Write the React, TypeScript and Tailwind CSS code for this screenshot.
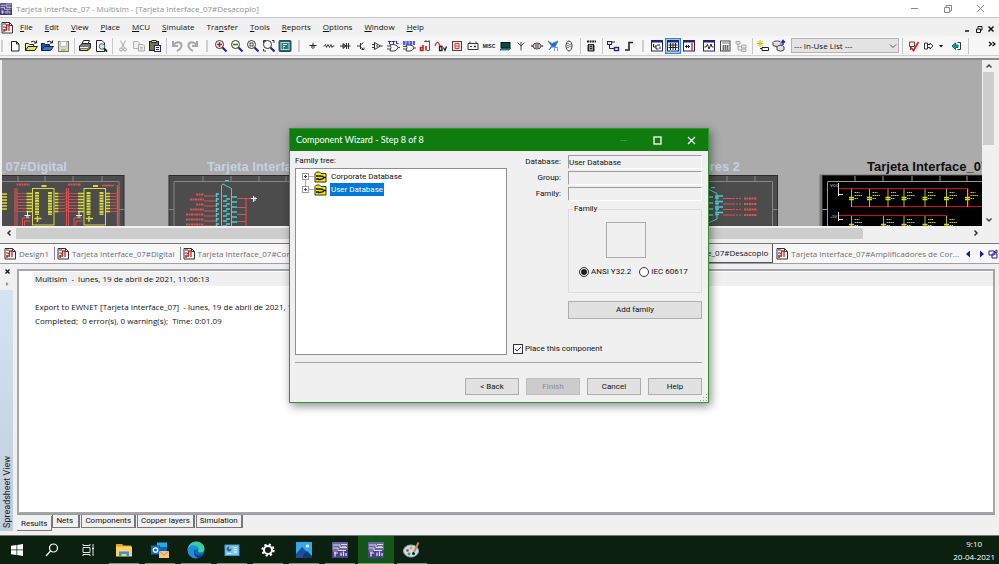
import React from "react";

const UI = "font-['Open_Sans','Noto_Sans',sans-serif]";

type G = { children?: React.ReactNode; w?: string };
const Ico = ({ children, w = "w-4" }: G) => (
  <svg viewBox="0 0 16 16" className={`h-4 ${w} block`} fill="none" stroke="#222" strokeWidth="1">
    {children}
  </svg>
);

const Grip = () => <span className="flex w-3 shrink-0 justify-center"><span className="h-3 w-[2px] bg-[#cfcfcf]" /></span>;
const Sep = () => <span className="flex w-[6px] shrink-0 justify-center"><span className="h-4 w-px bg-[#c8c8c8]" /></span>;

const folder = (a: string, b: string) => (
  <>
    <path d="M2.500 12.500V5.500H5.500L6.500 6.500H10.500V8" fill={b} />
    <path d="M2.500 12.500L5 8.500H14.500L11.500 12.500Z" fill={a} />
    <path d="M8 4Q10.500 2 13 4.500M13.500 2.500V5H11" />
  </>
);
const lens = (inner: React.ReactNode) => (
  <>
    <circle cx="6.500" cy="6.500" r="4" fill="#fff" stroke="#333" />
    <path d="M9.500 9.500L13.500 13.500" stroke="#26268a" strokeWidth="2.200" />
    {inner}
  </>
);
const panelIco = (inner: React.ReactNode) => (
  <>
    <rect x="2.500" y="2.500" width="11" height="10.500" fill="#fff" stroke="#22227c" />
    <path d="M2 3.500H14" stroke="#22227c" strokeWidth="2" />
    {inner}
  </>
);

const icons: Record<string, React.ReactNode> = {
  New: <path d="M4.500 3.500V13H12V6L9.500 3.500Z M9.500 3.500V6H12" fill="#fff" />,
  Open: folder("#e3e35a", "#f2f2b0"),
  "Open sample": folder("#2a7be8", "#2a57c8"),
  Save: <><rect x="3.500" y="3.500" width="10" height="10" fill="#d9d9c8" stroke="#777" /><rect x="5.500" y="3.500" width="6" height="5" fill="#fdfde8" stroke="#bbb" /><path d="M6 12H11" stroke="#c8c83c" strokeWidth="2" /></>,
  Print: <><path d="M5 6L6.500 2.500H12.500L11 6" fill="#fff" /><path d="M2.500 8L5 5.500H13.500V10L11 12.500H2.500Z" fill="#777" /><path d="M3 9.500H11" stroke="#eee" /><path d="M4 11.500H10" stroke="#d8d850" /></>,
  Preview: <><path d="M3.500 13.500V2.500H9L11.500 5V13.500Z" fill="#fff" /><circle cx="9" cy="8.500" r="2.800" fill="#cfe9e4" stroke="#466" /><path d="M11 10.500L14 13.500" strokeWidth="2" /></>,
  Cut: <path d="M5.500 2.500L9.500 10M10.500 2.500L6.500 10M6 10A1.500 1.500 0 1 0 6 13A1.500 1.500 0 1 0 6 10M10 10A1.500 1.500 0 1 0 10 13A1.500 1.500 0 1 0 10 10" stroke="#aaa" />,
  Copy: <><path d="M2.500 3.500H7L8.500 5V10.500H2.500Z" fill="#eee" stroke="#b0b0b0" /><path d="M7.500 6.500H12L13.500 8V13H7.500Z" fill="#eee" stroke="#aaa" /><path d="M9 9.500H12M9 11H12" stroke="#bbb" /></>,
  Paste: <><rect x="2.500" y="3.500" width="9" height="9" fill="#77773a" /><rect x="5" y="2.500" width="4" height="2" fill="#ddd" /><rect x="7.500" y="7.500" width="6" height="6" fill="#fff" stroke="#26268a" /><path d="M9 9.500H12M9 11.500H12" stroke="#26268a" /></>,
  Undo: <path d="M4 3V8H9M4 7.500Q7 3.500 10.500 4.500Q13.500 6 12 9.500Q10.500 12 8 13" stroke="#a8a8a8" strokeWidth="2" />,
  Redo: <path d="M12 3V8H7M12 7.500Q9 3.500 5.500 4.500Q2.500 6 4 9.500Q5.500 12 8 13" stroke="#a8a8a8" strokeWidth="2" />,
  "Zoom in": lens(<path d="M4 6.500H9M6.500 4V9" stroke="#c01818" strokeWidth="1.600" />),
  "Zoom out": lens(<path d="M4 6.500H9" stroke="#138a13" strokeWidth="1.600" />),
  "Zoom area": lens(<rect x="5" y="5" width="3" height="3" stroke="#444" />),
  "Zoom sheet": lens(<path d="M2.500 5V2.500H5M11 2.500H13V5M2.500 11V13H5" stroke="#333" />),
  "Full screen": <><rect x="2" y="2.500" width="12" height="11" rx="1" fill="#1f6b6b" stroke="#444" /><rect x="4" y="4.500" width="8" height="7" fill="#257f7d" stroke="#9be0d8" /><path d="M6 6.500H10M6 8.500H8M6 10H7" stroke="#d5fff8" /></>,
  Source: <path d="M8 5V7.500M4.500 7.500H11.500M6 9H10M7.500 10.500H8.500" />,
  Basic: <path d="M2.500 8H3.500L4.500 6.500L5.500 9.500L7 6.500L8.500 9.500L10 6.500L11 9.500L12 8H13.500" stroke="#444" />,
  Diode: <path d="M3 8H6M6 5.500V10.500L9 8ZM9.500 5V11M11.500 5V11M9.500 8H13.500" fill="#777" stroke="#333" />,
  Transistor: <path d="M4 8H7M7.500 5V11M7.500 7L10.500 4.500M7.500 9L10.500 11.500M8.500 11.500H11V9.500" stroke="#333" />,
  Analog: <path d="M5.500 4.500V11.500L11.500 8ZM3 6.500H5.500M3 9.500H5.500M11.500 8H13.500M7 8H9" stroke="#333" />,
  TTL: <><path d="M5 6.500H9Q13 7.500 13 9.500Q12 12.500 9 13H5Q7 9.500 5 6.500ZM2 8H5.500M2 11H5.500M13 9.500H15" stroke="#444" /><path d="M3 3.500H6.500M4.500 3V6M7 3.500H10.500M8.500 3V6M11.500 3V5.500H13.500" stroke="#2424e8" /></>,
  CMOS: <><path d="M5 7H9Q13 7.500 13 10Q12 12.500 9 13H5Q7 9.500 5 7ZM2 8.500H5.500M2 11H5.500M13 10H15" stroke="#444" /><path d="M2 4H14M2 6H14" stroke="#2424e8" strokeWidth="1.300" strokeDasharray="2.500 .8" /></>,
  "Misc digital": <><path d="M7 3.500H12.500V12.500H10M9 2V4M12 2V4" stroke="#555" /><path d="M6 7V13M6 9.500H3.500V12.500H6M9 8V12.500" stroke="#e01818" strokeWidth="1.600" /></>,
  Mixed: <><path d="M2 8Q4 2 6 6T9 8" stroke="#e03030" strokeWidth="1.300" /><path d="M6.500 8.500H9V12.500H6.500ZM10.500 9.500L12 12.500L13.500 8.500" strokeWidth="1.300" /></>,
  Indicator: <><rect x="3.500" y="3.500" width="9" height="9" fill="#fbe3e3" stroke="#444" /><path d="M6 5.500H10V8H6V10.500H10M6 5.500V8M10 8V10.500" stroke="#d43a3a" /></>,
  Power: <path d="M3 5.500H13V11.500H3ZM5 3.500V5.500M11 3.500V5.500M5 8.500H7M9 8.500H11M10 7.500V9.500" stroke="#333" />,
  Misc: <text x="8" y="10" textAnchor="middle" fontSize="5" fontWeight="bold" fill="#222" stroke="none" fontFamily="Liberation Sans">MISC</text>,
  Peripherals: <><rect x="4" y="4.500" width="9" height="5.500" fill="#064c46" stroke="#111" /><path d="M3 12L4.500 10.500H13.500L12 12Z" fill="#24a79b" stroke="#224" strokeWidth=".6" /></>,
  RF: <path d="M8 4V12.500M4.500 4.500L8 8L11.500 4.500" stroke="#444" />,
  Electromechanical: <><path d="M2 8H4M12 8H14" stroke="#d02020" strokeWidth="1.500" /><ellipse cx="8" cy="8" rx="4" ry="3" fill="#ddd" stroke="#444" /><path d="M6 7H10M6 9H10" stroke="#444" /></>,
  "NI component": <><path d="M3 3L7 5.500L13 3L11 7L10 9H7L4 12L6.500 8Z" fill="#2b6cb8" stroke="#4b8bd0" /><path d="M9.500 13V9.500H12.500V13" stroke="#7a9cc0" /></>,
  Connector: <><ellipse cx="8" cy="8" rx="3" ry="5" fill="#eee" stroke="#444" /><path d="M7 5V11M9 6V10" strokeDasharray="1 1" /></>,
  MCU: <><path d="M4 3.500H13" strokeWidth="2" strokeDasharray="2 .6" /><rect x="5.500" y="6.500" width="5" height="6.500" fill="#999" /><path d="M4 8H5M4 10H5M4 12H5M11 8H12M11 10H12M11 12H12M7 8.500H9M7 10.500H9" /></>,
  "Hierarchical block": <><rect x="2.500" y="3.500" width="4" height="3" fill="#ddf" stroke="#26268a" /><path d="M6.500 4H10M4.500 7V10.500H9" /><rect x="9.500" y="9.500" width="4" height="3" fill="#fff" stroke="#26268a" strokeWidth="1.400" /></>,
  Bus: <path d="M4 12H8V4.500H12" strokeWidth="1.600" />,
  Toolbox: panelIco(<path d="M4.500 6V9H7M7 7V11H9.500M8 7H11M11 8.500V11" />),
  Spreadsheet: <><rect x=".5" y=".5" width="15" height="15" fill="#cfe6fb" stroke="#2b88d8" strokeWidth="1.500" />{panelIco(<path d="M5.500 5V12M8 5V12M10.500 5V12M3.500 7H12.500M3.500 9.500H12.500" />)}</>,
  "SPICE viewer": panelIco(<><path d="M4 8.500H9M5.500 7V10M7.500 7V10" /><path d="M11 5V13" stroke="#e03030" strokeWidth="1.500" /></>),
  Grapher: panelIco(<path d="M3.500 9H5L6.500 6.500L8 11L10 6L11 9H12.500" />),
  Postprocessor: <><rect x="3.500" y="3" width="9.500" height="10" fill="#fff" stroke="#444" /><path d="M5 5H12M5 8H12M5 10H12M5 12H12M6.500 7V12M8.500 7V12M10.500 7V12" stroke="#555" strokeWidth=".8" /></>,
  "Parent sheet": <path d="M3 3.500H7V6H3ZM5 6V12H8M5 8.500H8M8.500 7H13V10H8.500ZM8.500 11H13V13.500H8.500Z" stroke="#aaa" fill="#e6e6e6" />,
  "Create component": <><path d="M5 2V9M1.500 5.500H8.500M2.500 3L7.500 8M7.500 3L2.500 8" stroke="#d9c000" /><path d="M7 9.500H13.500V12.500H7ZM5 10.500H7" fill="#fff" /></>,
  "Database manager": <><ellipse cx="6" cy="4.500" rx="4" ry="1.500" fill="#fff" stroke="#444" /><path d="M2 4.500V7.500Q6 10 10 7.500V4.500" fill="#ddd" stroke="#444" /><ellipse cx="9.500" cy="9" rx="3.500" ry="1.500" fill="#fff" stroke="#444" /><path d="M6 9V12Q9.500 14.500 13 12V9" fill="#ddd" stroke="#444" /><path d="M12 7V3M10.500 4.500L12 2.500L14 4.500" stroke="#2828c0" strokeWidth="1.500" /></>,
  "Rules check": <><path d="M4.500 4H9.500V8.500H4.500ZM5.500 8.500V12" stroke="#733" /><path d="M6 9.500L8.500 12.500L13.500 4" stroke="#e01818" strokeWidth="1.600" /></>,
  Transfer: <path d="M3.500 5H6.500V11H3.500ZM6.500 6.500H9V5L12 8L9 11V9.500H6.500" fill="#fff" stroke="#333" />,
  Back: <><path d="M3 8L6.500 5V7H9V9.500H6.500V11.500Z" fill="#12a3a3" stroke="#067" /><path d="M8.500 4.500H11.500V11.500H8.500" stroke="#333" /></>,
};

const Tool = ({ n }: { n: string }) => (
  <button type="button" aria-label={n} className="w-4 shrink-0"><Ico>{icons[n]}</Ico></button>
);
const Tools = ({ list }: { list: string[] }) => <>{list.map((n) => <Tool key={n} n={n} />)}</>;

const DocIcon = () => (
  <svg viewBox="0 0 13 13" className="block h-[13px] w-[13px] shrink-0" fill="none" stroke="#333">
    <path d="M1 1.500H8.500L11.500 4.500V12H1Z" fill="#fff" />
    <path d="M8.500 1.500V4.500H11.500M2 3H5M2 6H4M2 9H4" />
    <path d="M3 11V9H5.500V4H8V10M4 6.500H6" stroke="#d02020" strokeWidth="1.300" />
  </svg>
);

const AppIcon = ({ c }: { c: string }) => (
  <svg viewBox="0 0 16 16" className={`block shrink-0 ${c}`} fill="none">
    <rect width="16" height="16" rx="1" fill="#5a5590" />
    <path d="M0 8H16V16H0Z" fill="#3e397a" />
    <path d="M1 3H9V6H15M1 6H6V8.500H14M8 1.500H15" stroke="#d8d4f0" />
    <path d="M2 12H6M3 14.500V10M8 14V10.500M10.500 14V9.500M13 14V11" stroke="#ece6ff" strokeWidth="1.200" />
    <path d="M1 9.500H5M10 4H14" stroke="#d9a860" />
  </svg>
);

const menus: [string, string, string][] = [
  ["", "F", "ile"], ["", "E", "dit"], ["", "V", "iew"], ["", "P", "lace"], ["", "M", "CU"], ["", "S", "imulate"],
  ["Tra", "n", "sfer"], ["", "T", "ools"], ["", "R", "eports"], ["", "O", "ptions"], ["", "W", "indow"], ["", "H", "elp"],
];

const Frame = ({ x, w, fill, line, ticks }: { x: number; w: number; fill: string; line: string; ticks: number[] }) => (
  <g stroke={line} fill="none">
    <rect x={x} y="115.500" width={w} height="60" fill={fill} stroke="#2c2c2c" />
    <path d={`M${x + 5} 121.500H${x + w - 5}V170M${x + 5} 121.500V170`} />
    {ticks.map((t) => <path key={t} d={`M${t} 116V121`} />)}
    <path d={`M${x} 149.500H${x + 5}M${x + w - 5} 149.500H${x + w}`} />
  </g>
);

const Chip = ({ x }: { x: number }) => (
  <g fill="none">
    {[0, 1, 2, 3, 4, 5, 6].map((i) => (
      <g key={i}>
        <path d={`M${x - 18} ${131.5 + i * 3}L${x - 15} ${133.5 + i * 3}H${x - 6}`} stroke="#e05050" strokeWidth=".8" />
        <path d={`M${x - 6} ${133.5 + i * 3}H${x}M${x + 22} ${133.5 + i * 3}H${x + 26}`} stroke="#d8d83c" strokeWidth="1.600" />
        <path d={`M${x + 26} ${133.5 + i * 3}H${x + 32}L${x + 35} ${131.5 + i * 3}`} stroke="#e05050" strokeWidth=".8" />
      </g>
    ))}
    <rect x={x} y="128.500" width="21.500" height="36.500" stroke="#d8d83c" />
    <path d={`M${x + 4.5} 132V155M${x + 17.5} 132V155`} stroke="#d8d83c" strokeWidth="4" strokeDasharray="2 .7" />
    <path d={`M${x + 2} 158.500H${x + 9}M${x + 5} 156V162`} stroke="#d8d83c" strokeWidth="1.500" />
    <path d={`M${x - 17.5} 128V166M${x - 15.5} 128V166M${x - 10} 166V158H${x - 2}M${x - 8} 166V161H${x - 2}`} stroke="#e05050" />
    <path d={`M${x - 5} 151V155M${x - 8} 155.500H${x - 2}M${x - 6.5} 157H${x - 3.5}`} stroke="#eee" />
    <path d={`M${x - 16} 124.500H${x - 3}`} stroke="#e05050" strokeWidth="2" strokeDasharray="2 .5" />
    <path d={`M${x + 9} 126H${x + 14}`} stroke="#d8d83c" strokeWidth="2" />
  </g>
);

const Cap = ({ x, y }: { x: number; y: number }) => (
  <g fill="none">
    <path d={`M${x} ${y}V${y + 18}`} stroke="#b8b820" />
    <path d={`M${x - 2.5} ${y + 8.500}H${x + 2.5}M${x - 2.5} ${y + 10.500}H${x + 2.5}`} stroke="#d8d820" strokeWidth="1.500" />
    <path d={`M${x + 3} ${y + 3.500}H${x + 8}M${x + 3} ${y + 6.500}H${x + 11}M${x + 3} ${y + 9.500}H${x + 7}`} stroke="#c8c820" strokeDasharray="1.500 .5" />
  </g>
);

const Schematic = () => (
  <svg className="block h-[166px] w-full bg-[#ababab]" viewBox="2 60 980 166" preserveAspectRatio="xMinYMin slice">
    <g fontFamily="Liberation Sans, Arial, sans-serif" fontSize="13" fontWeight="bold" fill="#c5d0e2">
      <text x="67" y="171" textAnchor="end">Tarjeta Interface_07#Digital</text>
      <text x="207" y="171">Tarjeta Interface_07</text>
      <text x="740" y="171" textAnchor="end">Conectores 2</text>
      <text x="867" y="171" fill="#101010">Tarjeta Interface_07</text>
    </g>
    <g transform="translate(0 60)">
      <Frame x={-40} w={164} fill="#4c4c4c" line="#858585" ticks={[18, 45, 73, 102]} />
      <path d="M2 134H7M2 137H7M2 140H7M2 143H7M2 146H7M2 149H7" stroke="#d8d83c" strokeWidth="1.500" />
      <Chip x={32.5} />
      <Chip x={84} />
      <path d="M117.500 125V166M102 125.500H114" stroke="#e05050" strokeWidth="1.500" />
      <Frame x={169} w={140} fill="#4c4c4c" line="#858585" ticks={[203, 231, 259, 286]} />
      {[0, 1, 2, 3, 4, 5, 6].map((i) => (
        <g key={i}>
          <path d={`M${i > 3 ? 186 : i % 2 ? 190 : 196} ${134.5 + i * 5}H204`} stroke="#e05050" strokeWidth="1.800" strokeDasharray="2 .5" />
          <path d={`M204 ${136 + i * 5}H217`} stroke="#e05050" />
          <path d={`M216 ${134 + i * 5}H219M216.500 ${133 + i * 5}V${137 + i * 5}M223 ${136 + i * 5}H227M226 ${139 + i * 5}H230M232 ${137 + i * 5}H237`} stroke="#50cccc" strokeWidth="1.400" />
        </g>
      ))}
      <path d="M221.500 166V125L223 124L231.500 128.500V166M225 120.500H229" stroke="#50cccc" fill="none" />
      <path d="M237 138.500H251M246 138.500V166M237 147.500H246M237 154.500H246M237 161.500H246" stroke="#e05050" fill="none" />
      <path d="M251 138.500H257M253.500 136V142M255 137V141" stroke="#eee" />
      <Frame x={640} w={137.5} fill="#4c4c4c" line="#858585" ticks={[727, 755]} />
      <path d="M708 129L717 133.500V159L708 163M711 127.500H715" stroke="#50cccc" fill="none" />
      {[0, 1, 2, 3].map((i) => (
        <g key={i}>
          <path d={`M709 ${137 + i * 6}H713M715 ${136 + i * 5.5}H723M715 ${138 + i * 5.5}H719`} stroke="#50cccc" strokeWidth="1.300" />
          <path d={`M723 ${138.500 + i * 5.5}H735`} stroke="#e05050" />
          <path d={`M736 ${138.500 + i * 5.5}H742`} stroke="#e05050" strokeDasharray="2 1" />
          <path d={`M744 ${138.500 + i * 5.5}H757`} stroke="#e05050" strokeWidth="1.800" strokeDasharray="2 .5" />
        </g>
      ))}
      <rect x="819.500" y="114.500" width="180" height="70" fill="#777" />
      <Frame x={822.5} w={180} fill="#000" line="#999" ticks={[855, 883, 912, 940, 967]} />
      <text x="830" y="127" fontSize="4" fill="#ddd" fontFamily="Liberation Sans">VCC</text>
      <text x="830" y="158" fontSize="4" fill="#ddd" fontFamily="Liberation Sans">+5V</text>
      <path d="M838.500 123V136M838.500 134.500H843M838.500 152V161M838.500 159.500H843" stroke="#ddd" />
      <path d="M839 128.500H968V146.500M852 146.500H982M839 155.500H947" stroke="#d01010" fill="none" />
      {[851.5, 869.5, 888, 904, 925, 946.5, 967.5].map((x) => <Cap key={x} x={x} y={129} />)}
      {[851.5, 883.5, 904, 925, 946.5].map((x) => <Cap key={x} x={x} y={156} />)}
    </g>
  </svg>
);

const DocTab = ({ t }: { t: string }) => (
  <button type="button" className="flex shrink-0 items-center gap-[2px] border-r border-[#8a8a8a] pr-[5px] text-[#707070]"><DocIcon />{t}</button>
);

const Field = ({ id, label, value }: { id: string; label: string; value: string }) => (
  <div className="flex items-center justify-end">
    <label htmlFor={id} className="pr-[7px]">{label}</label>
    <input id={id} readOnly defaultValue={value} className="h-[14px] w-[134px] border border-t-[#9c9c9c] border-r-white border-b-white border-l-[#9c9c9c] bg-[#f0f0f0] outline-none" />
  </div>
);

const TreeRow = ({ t, sel }: { t: string; sel?: boolean }) => (
  <li className="flex h-[13px] items-center">
    <button type="button" aria-label={`Expand ${t}`} className="flex items-center">
      <svg viewBox="0 0 12 13" className="block h-[13px] w-3" fill="none">
        <path d={sel ? "M3.500 0V3M7 6.500H12" : "M3.500 10V13M7 6.500H12"} stroke="#aaa" />
        <rect x=".5" y="3.500" width="6" height="6" fill="#fff" stroke="#999" />
        <path d="M2 6.500H5M3.500 5V8" stroke="#2a4a8c" />
      </svg>
    </button>
    <svg viewBox="0 0 13 12" className="mr-[3px] block h-3 w-[13px]" fill="none" stroke="#333">
      <path d="M1 11V2.500L2.500 1H5.500L7 2.500H12V11Z" fill="#f0e800" />
      <path d="M2 5H6Q9 5 10 6.500Q9 8.500 5 8.500H4M2 8H5M10 6.500H12" stroke="#111" strokeWidth="1.300" />
    </svg>
    <span className={sel ? "bg-[#0078d7] px-px leading-[13px] text-white" : "px-px leading-[13px]"}>{t}</span>
  </li>
);

const btn = "h-[17px] w-[54px] border border-[#adadad] bg-[#e1e1e1]";

const Wizard = () => (
  <section role="dialog" aria-label="Component Wizard" className="absolute top-32 left-[289px] flex h-[275px] w-[420px] flex-col border border-[#2f932f] bg-[#f0f0f0] font-[Roboto,'Noto_Sans',sans-serif] text-[8px] leading-[12px] text-[#111] shadow-[2px_3px_9px_rgba(0,0,0,0.45)]">
    <header className="flex h-[22px] shrink-0 items-center bg-[#107c10] pl-[6px] font-[Lato,'Noto_Sans',sans-serif] text-[9px] text-white">
      <h1>Component Wizard - Step 8 of 8</h1>
      <div className="ml-auto flex">
        <button type="button" aria-label="Minimize" className="flex w-[34px] justify-center text-[#3f963f]"><svg viewBox="0 0 9 9" className="h-[9px] w-[9px]" stroke="currentColor"><path d="M1 4.500H8" /></svg></button>
        <button type="button" aria-label="Maximize" className="flex w-[34px] justify-center"><svg viewBox="0 0 9 9" className="h-[9px] w-[9px]" fill="none" stroke="#fff"><rect x="1" y="1" width="7" height="7" strokeWidth="1.300" /></svg></button>
        <button type="button" aria-label="Close" className="flex w-[34px] justify-center"><svg viewBox="0 0 9 9" className="h-[9px] w-[9px]" stroke="#fff"><path d="M1 1L8 8M8 1L1 8" strokeWidth="1.200" /></svg></button>
      </div>
    </header>
    <div className="flex grow flex-col pt-1 pr-[6px] pb-[7px] pl-[5px]">
      <div className="flex h-[200px] gap-[6px]">
        <div className="flex w-[212px] flex-col">
          <p className="h-[13px]">Family tree:</p>
          <ul className="grow border border-[#8c8f94] bg-white pt-px pl-[6px]">
            <TreeRow t="Corporate Database" />
            <TreeRow t="User Database" sel />
          </ul>
        </div>
        <div className="flex grow flex-col">
          <div className="flex flex-col gap-[2px]">
            <Field id="db" label="Database:" value="User Database" />
            <Field id="grp" label="Group:" value="" />
            <Field id="fam" label="Family:" value="" />
          </div>
          <fieldset className="mt-[3px] ml-auto h-[89px] w-[134px] border border-[#dcdcdc]">
            <legend className="ml-[4px] px-px leading-[10px]">Family</legend>
            <div className="mt-2 ml-[37px] h-9 w-10 border border-[#ababab]" />
            <div className="mt-2 flex items-center pl-[10px]">
              <label className="flex items-center gap-[2px] whitespace-nowrap"><input type="radio" name="std" defaultChecked className="m-0 h-[10px] w-[10px] appearance-none rounded-full border border-[#333] bg-clip-content p-px checked:bg-[#222]" />ANSI Y32.2</label>
              <label className="ml-2 flex items-center gap-[2px] whitespace-nowrap"><input type="radio" name="std" className="m-0 h-[10px] w-[10px] appearance-none rounded-full border border-[#333] bg-white p-px" />IEC 60617</label>
            </div>
          </fieldset>
          <button type="button" className="mt-2 ml-auto h-[18px] w-[134px] border border-[#adadad] bg-[#e1e1e1]">Add family</button>
          <label className="mt-auto flex items-center gap-[2px]">
            <span className="relative flex">
              <input type="checkbox" defaultChecked className="h-[10px] w-[10px] appearance-none border border-[#333] bg-white" />
              <svg viewBox="0 0 10 10" className="pointer-events-none absolute inset-0 h-[10px] w-[10px]" fill="none" stroke="#222"><path d="M2 5L4 7L8 3" /></svg>
            </span>
            Place this component
          </label>
        </div>
      </div>
      <hr className="mt-[7px] border-t border-[#a5a5a5]" />
      <div className="mt-auto flex justify-end gap-[7px]">
        <button type="button" className={btn}>&lt; Back</button>
        <button type="button" disabled className="h-[17px] w-[54px] border border-[#bfbfbf] bg-[#cccccc] text-[#8d8d8d]">Finish</button>
        <button type="button" className={btn}>Cancel</button>
        <button type="button" className={btn}>Help</button>
      </div>
    </div>
    <svg viewBox="0 0 8 8" className="absolute right-0 bottom-0 h-2 w-2" fill="#a0a0a0"><path d="M6 0h1v1h-1zM3 3h1v1h-1zM6 3h1v1h-1zM0 6h1v1h-1zM3 6h1v1h-1zM6 6h1v1h-1z" /></svg>
  </section>
);

const Task = ({ n, open, active, children }: { n: string; open?: boolean; active?: boolean; children: React.ReactNode }) => (
  <button type="button" aria-label={n} className={`flex h-full w-9 flex-col items-center justify-center ${active ? "bg-[#14561a]" : ""}`}>
    <span className="flex grow items-center"><svg viewBox="0 0 18 18" className="h-[18px] w-[18px]" fill="none">{children}</svg></span>
    <span className={`h-px ${active ? "w-full" : "w-[30px]"} ${open ? "bg-[#6f9a72]" : ""}`} />
  </button>
);

const multisim = (
  <>
    <rect x="1" y="1" width="16" height="16" rx="1" fill="#6a64a0" />
    <path d="M1 9H17V17H1Z" fill="#48428a" />
    <path d="M2 4H9V6.500H16M2 7H7V9.500H15M10 3.500H16" stroke="#dcd8f4" />
    <path d="M3 12H7M4 15.500V11M10 15V11.500M12.500 15V10.500M15 15V12" stroke="#ece6ff" strokeWidth="1.200" />
    <path d="M2 10H6M11 5.500H15" stroke="#e0b070" />
  </>
);

export default function App() {
  return (
    <div className={`relative flex h-screen w-full flex-col overflow-hidden bg-[#f0f0f0] text-[8px] leading-[12px] text-[#111] ${UI}`}>
      <header className="flex h-[18px] shrink-0 items-center border-b border-[#c9c9c9] bg-white text-[#8f8f8f]">
        <AppIcon c="h-3 w-3" />
        <span className="ml-1">Tarjeta Interface_07 - Multisim - [Tarjeta Interface_07#Desacoplo]</span>
        <div className="mr-[2px] ml-auto flex text-[#888]">
          <button type="button" aria-label="Minimize" className="flex w-[33px] justify-center"><svg viewBox="0 0 9 9" className="h-[9px] w-[9px]" stroke="currentColor"><path d="M1 4.500H8" /></svg></button>
          <button type="button" aria-label="Restore" className="flex w-[33px] justify-center"><svg viewBox="0 0 9 9" className="h-[9px] w-[9px]" fill="none" stroke="currentColor"><path d="M1.500 3.500H6.500V8.500H1.500ZM3 3V1.500H8.500V7H7" /></svg></button>
          <button type="button" aria-label="Close" className="flex w-[33px] justify-center"><svg viewBox="0 0 9 9" className="h-[9px] w-[9px]" stroke="currentColor"><path d="M1 1L8 8M8 1L1 8" /></svg></button>
        </div>
      </header>

      <nav className="flex h-[18px] shrink-0 items-center pl-[1px]">
        <DocIcon />
        <div className="flex gap-3 pl-[6px]">
          {menus.map(([a, b, c]) => <button key={b + c} type="button">{a}<u>{b}</u>{c}</button>)}
        </div>
        <div className="mt-1 mr-1 ml-auto flex gap-1">
          <svg viewBox="0 0 8 8" className="h-2 w-2" stroke="#111" strokeWidth="1.500"><path d="M2 6H6" /></svg>
          <svg viewBox="0 0 8 8" className="h-2 w-2" stroke="#111" fill="none"><path d="M1.500 4H5.500V7.500H1.500ZM3 3.500V1.500H7V5H6M3 1.500H7" /></svg>
          <svg viewBox="0 0 8 8" className="h-2 w-2" stroke="#111" strokeWidth="1.500"><path d="M1.500 1.500L6.500 6.500M6.500 1.500L1.500 6.500" /></svg>
        </div>
      </nav>

      <div className="flex h-5 shrink-0 items-center border-b border-[#cfcfcf] bg-[#f7f7f7]">
        <span className="mr-1 ml-px h-3 w-[2px] bg-[#cfcfcf]" />
        <Tools list={["New", "Open", "Open sample", "Save"]} />
        <Sep />
        <Tools list={["Print", "Preview"]} />
        <Sep />
        <Tools list={["Cut", "Copy", "Paste"]} />
        <Sep />
        <Tools list={["Undo", "Redo"]} />
        <Grip />
        <Tools list={["Zoom in", "Zoom out", "Zoom area", "Zoom sheet", "Full screen"]} />
        <Grip />
        <Tools list={["Source", "Basic", "Diode", "Transistor", "Analog", "TTL", "CMOS", "Misc digital", "Mixed", "Indicator", "Power", "Misc", "Peripherals", "RF", "Electromechanical", "NI component", "Connector"]} />
        <Sep />
        <Tools list={["MCU"]} />
        <Sep />
        <Tools list={["Hierarchical block", "Bus"]} />
        <Grip />
        <Tools list={["Toolbox", "Spreadsheet", "SPICE viewer"]} />
        <span className="w-1 shrink-0" />
        <Tools list={["Grapher", "Postprocessor", "Parent sheet"]} />
        <Sep />
        <Tools list={["Create component", "Database manager"]} />
        <div className="relative ml-1 w-[108px] shrink-0">
          <select aria-label="In-use list" className="block h-[15px] w-full appearance-none border border-[#b4b4b4] bg-[#e3e3e3] pl-[2px] text-[8px] leading-[12px] outline-none">
            <option>--- In-Use List ---</option>
          </select>
          <svg viewBox="0 0 8 8" className="pointer-events-none absolute top-1 right-[2px] h-2 w-2" fill="none" stroke="#555"><path d="M1 2.500L4 5.500L7 2.500" /></svg>
        </div>
        <Sep />
        <Tools list={["Rules check", "Transfer"]} />
        <svg viewBox="0 0 8 8" className="h-2 w-2 shrink-0" fill="#111"><path d="M2 3H6L4 5.500Z" /></svg>
        <span className="w-1 shrink-0" />
        <Tools list={["Back"]} />
        <Sep />
        <button type="button" aria-label="More tools" className="mr-[3px] mb-1 ml-auto"><svg viewBox="0 0 8 8" className="h-2 w-2" fill="none" stroke="#111" strokeWidth="1.300"><path d="M1 2L3.500 4L1 6M4.500 2L7 4L4.500 6" /></svg></button>
      </div>

      <main className="mt-[2px] flex shrink-0 flex-col border-t-2 border-[#8b8b8b] pr-1 pl-[2px]">
        <div className="flex">
          <div className="min-w-0 grow overflow-hidden"><Schematic /></div>
          <div className="flex w-[13px] shrink-0 flex-col items-center justify-between bg-[#f0f0f0]">
            <svg viewBox="0 0 12 12" className="h-3 w-3 shrink-0" fill="none" stroke="#444" strokeWidth="1.500"><path d="M3.500 7.500L6 5L8.500 7.500" /></svg>
            <span className="mb-auto h-[73px] w-[11px] bg-[#cdcdcd]" />
            <svg viewBox="0 0 12 12" className="h-3 w-3 shrink-0" fill="none" stroke="#444" strokeWidth="1.500"><path d="M3.500 4.500L6 7L8.500 4.500" /></svg>
          </div>
        </div>
        <div className="mt-px mr-[13px] flex h-3 items-center bg-[#f0f0f0]">
          <svg viewBox="0 0 12 12" className="h-3 w-[14px]" fill="none" stroke="#333" strokeWidth="1.500"><path d="M7.500 3.500L5 6L7.500 8.500" /></svg>
          <span className="h-[11px] w-[847px] bg-[#cdcdcd]" />
          <svg viewBox="0 0 12 12" className="ml-auto h-3 w-3" fill="none" stroke="#333" strokeWidth="1.500"><path d="M4.500 3.500L7 6L4.500 8.500" /></svg>
        </div>
      </main>

      <nav className="mt-1 flex h-[21px] shrink-0 items-stretch justify-between overflow-hidden border-t border-b border-t-[#777] border-b-[#a0a0a0] bg-[#f7f7f7]">
        <div className="flex w-0 grow gap-[2px] overflow-hidden py-[3px] pl-1">
          <DocTab t="Design1" />
          <DocTab t="Tarjeta Interface_07#Digital" />
          <DocTab t="Tarjeta Interface_07#Conectores" />
        </div>
        <div className="flex">
          <button type="button" className="flex items-center gap-[2px] border-r border-b border-[#555] bg-[#f0f0f0] pr-1"><DocIcon />Tarjeta Interface_07#Desacoplo</button>
          <button type="button" className="flex items-center gap-[2px] pl-[3px] text-[#707070]"><DocIcon />Tarjeta Interface_07#Amplificadores de Cor...</button>
          <svg viewBox="0 0 36 12" className="my-auto ml-1 h-3 w-9" fill="#1c1c8c">
            <path d="M7 2.500V9.500L3 6ZM17 2.500V9.500L21 6Z" />
            <path d="M26 3H31V7H26ZM29 6H34V10H29ZM31 4L34 2V5Z" fill="#fff" stroke="#1c1c9c" />
          </svg>
        </div>
      </nav>

      <section className="mt-[2px] flex min-h-0 grow">
        <aside className="flex w-[13px] shrink-0 flex-col items-center pb-1">
          <svg viewBox="0 0 12 24" className="h-6 w-3 shrink-0" fill="none" stroke="#111" strokeWidth="1.300"><path d="M4.500 3.500L8.500 7.500M8.500 3.500L4.500 7.500" /><path d="M5 16V20L7.500 18Z" fill="#888" stroke="none" /></svg>
          <div className="flex w-full grow items-end justify-center bg-linear-to-b from-[#d6e3f1] to-[#bfcddc] pb-[3px]">
            <span className="rotate-180 font-[Roboto,'Noto_Sans',sans-serif] text-[9px] whitespace-nowrap text-[#222] [writing-mode:vertical-rl]">Spreadsheet View</span>
          </div>
        </aside>
        <div className="ml-1 flex grow flex-col pr-1">
          <div className="mt-[3px] flex grow flex-col border-2 border-[#a5a5ac] bg-white pt-px pl-[15px]">
            <p className="h-[14px] bg-[#f0f0f0] pl-px leading-[14px] whitespace-pre">Multisim  -  lunes, 19 de abril de 2021, 11:06:13</p>
            <p className="mt-[14px] h-[14px] pl-px leading-[14px] whitespace-pre">Export to EWNET [Tarjeta Interface_07]  - lunes, 19 de abril de 2021, 11:08:22</p>
            <p className="h-[14px] pl-px leading-[14px] whitespace-pre">Completed;  0 error(s), 0 warning(s);  Time: 0:01.09</p>
          </div>
          <div className="flex h-[18px] shrink-0 items-start border-t border-[#999] font-[Roboto,'Noto_Sans',sans-serif]">
            <button type="button" className="mt-px h-[15px] border-r border-b border-[#777] px-1 pt-px">Results</button>
            {["Nets", "Components", "Copper layers", "Simulation"].map((t) => (
              <button key={t} type="button" className="mr-px h-[13px] min-w-[28px] border-r-2 border-b border-l border-[#777] px-[3px] text-left">{t}</button>
            ))}
          </div>
          <span className="h-[3px] shrink-0" />
        </div>
      </section>

      <footer className="flex h-[29px] shrink-0 items-stretch border-t border-[#777] bg-[#0b200e]">
        <button type="button" aria-label="Start" className="flex w-[34px] items-center justify-center"><svg viewBox="0 0 12 12" className="h-3 w-3" fill="#fff"><path d="M0 1.700L5.500 1V5.600H0ZM6.200 .9L12 0V5.600H6.200ZM0 6.300H5.500V11L0 10.300ZM6.200 6.300H12V12L6.200 11.100Z" /></svg></button>
        <Task n="Search"><circle cx="10.500" cy="7" r="4" stroke="#fff" strokeWidth="1.200" /><path d="M7.500 10L3 15" stroke="#fff" strokeWidth="1.200" /></Task>
        <Task n="Task view"><path d="M4 6.500H11V11.500H4ZM4 3V4.500H11V3M4 15V13.500H11V15M14 3V6M14 9V15" stroke="#e4e4e4" /><path d="M13 6.500H15V8.500H13Z" fill="#fff" /></Task>
        <Task n="File Explorer" open><path d="M1 3H7L8.500 4.500H16V7H1Z" fill="#e3a21a" /><path d="M1 5.500H17V15.500H1Z" fill="#fcd462" /><path d="M4 15.500V10.500H14V15.500H11.500V13H6.500V15.500Z" fill="#3a8ede" /></Task>
        <Task n="Outlook" open><path d="M6 1.500H16V12H6Z" fill="#28a8ea" /><path d="M6 6H16V12H6Z" fill="#0f64b8" /><path d="M0 4.500H9V13.500H0Z" fill="#0f6cbd" /><circle cx="4.500" cy="9" r="2.200" stroke="#fff" strokeWidth="1.300" /><path d="M8 10H18V17H8Z" fill="#f7c68b" /><path d="M8 10L13 14L18 10" stroke="#d08a40" /></Task>
        <Task n="Edge" open><circle cx="9" cy="9" r="8.500" fill="#0f6cbd" /><path d="M.8 7Q3 .5 9.500 .5Q17.500 1.500 17.500 8Q17 11.500 13 11.500Q10 11 11.500 9Q11 5.500 7 5Q3 5 .8 8Z" fill="#3ccf9a" /><path d="M.6 8Q3 3 8 4.500Q12 5.500 11.500 9Q8 6.500 6.500 10Q6.500 14.500 12 16.800Q6 18.500 2.500 14.500Q.5 12 .6 8Z" fill="#1b8fe0" /><path d="M8 8.500Q6.500 13 11 14.500Q14 15 16.500 13Q14 17.500 10.500 17Q5 14 8 8.500Z" fill="#0b3f80" /></Task>
        <Task n="Control panel" open><rect x="2" y="4" width="14" height="10.500" fill="#7cc8f2" stroke="#3d9ad6" /><circle cx="6" cy="8" r="2.500" fill="#1c6fb8" /><path d="M6 8V5.500A2.500 2.500 0 0 1 8.500 8Z" fill="#f4a030" /><path d="M11 6.500H14M11 8.500H14M11 11H14M4 12.500H8" stroke="#fff" /></Task>
        <Task n="Settings" open><circle cx="9" cy="9" r="4" stroke="#fff" strokeWidth="2" /><circle cx="9" cy="9" r="5.600" stroke="#fff" strokeWidth="2" strokeDasharray="2.200 2.198" /></Task>
        <Task n="Photos" open><path d="M1 1H17V17H1Z" fill="#35a7ea" /><path d="M1 13L7 6L17 16V17H1Z" fill="#1b4f9c" /><path d="M8 14L12 10L17 15V17H8Z" fill="#123878" /><circle cx="12.500" cy="5" r="1.600" fill="#fff" /></Task>
        <Task n="Multisim" open>{multisim}</Task>
        <Task n="Multisim (active)" open active>{multisim}</Task>
        <Task n="Paint" open><ellipse cx="8" cy="10" rx="7.500" ry="6" fill="#c9dff0" stroke="#8fb0cc" /><circle cx="4.500" cy="9.500" r="1.400" fill="#e04040" /><circle cx="8" cy="7" r="1.400" fill="#e8a020" /><circle cx="6" cy="13" r="1.400" fill="#38a848" /><circle cx="10.500" cy="12.500" r="1.500" fill="#0b200e" /><path d="M15.500 1.500L11 11" stroke="#c98848" strokeWidth="2" /></Task>
        <div className="mr-1 ml-auto flex flex-col justify-center text-center leading-[13px] text-white"><span>9:10</span><span>20-04-2021</span></div>
      </footer>

      <Wizard />
    </div>
  );
}
